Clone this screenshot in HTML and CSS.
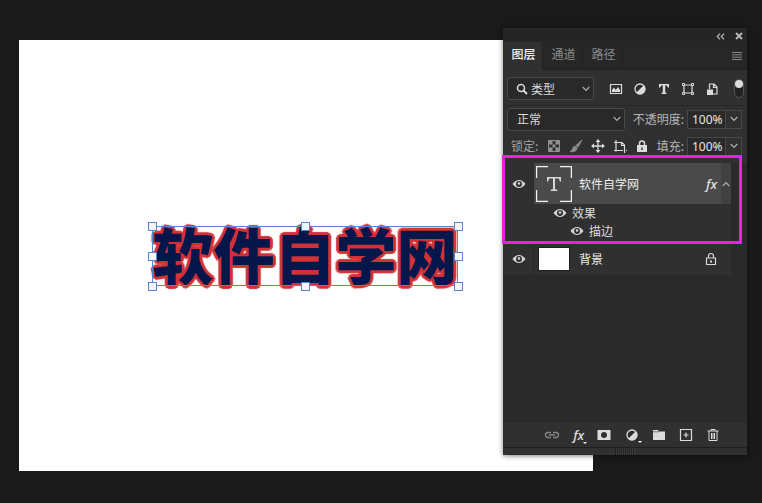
FILE: index.html
```html
<!DOCTYPE html>
<html lang="zh-CN">
<head>
  <meta charset="UTF-8" />
  <meta name="viewport" content="width=device-width, initial-scale=1.0" />
  <title>软件自学网</title>
  <link rel="stylesheet" href="styles.css">
</head>
<body>
  <svg class="sprite" aria-hidden="true">
    <symbol id="eye" viewBox="0 0 14 10">
      <path d="M.5 5Q3.500 1 7 1t6.500 4Q10.500 9 7 9T.5 5z" fill="#d6d6d6"/>
      <circle cx="7" cy="5" r="3" fill="#303030"/>
      <circle cx="7" cy="4.500" r="1.300" fill="#d6d6d6"/>
    </symbol>
    <symbol id="chevron" viewBox="0 0 8 6">
      <path d="M.7 1L4 4.400 7.300 1" fill="none" stroke="currentColor" stroke-width="1.100"/>
    </symbol>
    <symbol id="half" viewBox="0 0 14 14">
      <circle cx="7" cy="7" r="5" fill="#2c2c2c" stroke="currentColor" stroke-width="1.300"/>
      <path d="M10.800 3.200A5.400 5.400 0 0 1 3.200 10.800z" fill="currentColor"/>
    </symbol>
  </svg>

  <main class="workspace">
    <section class="artboard">
      <div class="text-object">
        <h1>软件自学网</h1>
        <i class="handle nw"></i><i class="handle n"></i><i class="handle ne"></i>
        <i class="handle w"></i><i class="handle e"></i>
        <i class="handle sw"></i><i class="handle s"></i><i class="handle se"></i>
      </div>
    </section>

    <aside class="panel">
      <div class="titlebar">
        <button aria-label="折叠"><svg width="9" height="7" viewBox="0 0 9 7"><path d="M4 .7L1.300 3.500 4 6.300M8 .7L5.300 3.500 8 6.300" fill="none" stroke="currentColor" stroke-width="1.200"/></svg></button>
        <button class="close" aria-label="关闭"><svg width="8" height="8" viewBox="0 0 8 8"><path d="M1 1l6 6M7 1L1 7" stroke="currentColor" stroke-width="2"/></svg></button>
      </div>

      <nav class="tabs">
        <button class="tab active">图层</button>
        <button class="tab">通道</button>
        <button class="tab">路径</button>
        <button class="menu" aria-label="菜单"><svg width="10" height="8" viewBox="0 0 10 8"><path d="M0 .5h10M0 2.800h10M0 5.200h10M0 7.500h10" stroke="currentColor"/></svg></button>
      </nav>

      <div class="row filter-row">
        <div class="select kind">
          <svg class="search" width="12" height="12" viewBox="0 0 12 12"><circle cx="5" cy="5" r="3.500" fill="none" stroke="currentColor" stroke-width="1.500"/><path d="M7.500 7.500L11 11" stroke="currentColor" stroke-width="2"/></svg>
          <select aria-label="过滤"><option>类型</option></select>
          <svg class="arrow" width="8" height="6"><use href="#chevron"/></svg>
        </div>
        <div class="filters">
          <button aria-label="像素"><svg width="14" height="14" viewBox="0 0 14 14"><path d="M1.500 2.500h11v9h-11z" fill="none" stroke="currentColor" stroke-width="1.200"/><path d="M3 10V8l2-2.500L6.800 8 9 5l2 3v2z" fill="currentColor"/></svg></button>
          <button aria-label="调整"><svg width="14" height="14"><use href="#half"/></svg></button>
          <button aria-label="文字"><svg width="14" height="14" viewBox="0 0 14 14"><path d="M2 2h10v3.500h-1.200L10 3.600H8.200v7l1.300.3V12h-5v-1.100l1.300-.3v-7H4l-.8 1.900H2z" fill="currentColor"/></svg></button>
          <button aria-label="形状"><svg width="14" height="14" viewBox="0 0 14 14"><path d="M3 3h8v8H3z" fill="none" stroke="currentColor" stroke-width="1.200"/><path d="M1.500 1.500h2v2h-2zM10.500 1.500h2v2h-2zM1.500 10.500h2v2h-2zM10.500 10.500h2v2h-2z" fill="#303030" stroke="currentColor"/></svg></button>
          <button aria-label="智能对象"><svg width="14" height="14" viewBox="0 0 14 14"><path d="M4.500 7V2H9l3 3v7H7.500M8.500 2v3.500H12" fill="none" stroke="currentColor" stroke-width="1.200"/><path d="M2 7.500h6V13H2z" fill="currentColor"/></svg></button>
        </div>
        <button class="toggle" aria-label="过滤开关"></button>
      </div>

      <div class="row blend-row">
        <div class="select blend">
          <select aria-label="混合模式"><option>正常</option></select>
          <svg class="arrow" width="8" height="6"><use href="#chevron"/></svg>
        </div>
        <div class="amount">
          <label for="opacity">不透明度:</label>
          <input id="opacity" value="100%">
          <button aria-label="调整不透明度"><svg width="8" height="6"><use href="#chevron"/></svg></button>
        </div>
      </div>

      <div class="row lock-row">
        <span class="lock-label">锁定:</span>
        <div class="locks">
          <button aria-label="锁定透明像素"><svg width="14" height="14" viewBox="0 0 14 14"><path d="M1.500 1.500h11v11h-11z" fill="none" stroke="#909090"/><path d="M2 2h3.500v3.500H2zM8.500 2H12v3.500H8.500zM5.500 5.500h3v3h-3zM2 8.500h3.500V12H2zM8.500 8.500H12V12H8.500z" fill="#909090"/></svg></button>
          <button aria-label="锁定图像像素"><svg width="14" height="14" viewBox="0 0 14 14"><path d="M13 1L7 6.500l1.800 1.800zM6 7.200c-2 0-2 1.800-2.500 3-.4 1-1.500 1.800-2.500 2.300 3 .8 7-.2 7-3.300z" fill="#8c8c8c" stroke="#8c8c8c"/></svg></button>
          <button aria-label="锁定位置"><svg width="14" height="14" viewBox="0 0 14 14"><path d="M7 2v10M2 7h10" stroke="currentColor" stroke-width="1.300"/><path d="M7 0l2.500 3h-5zM7 14l2.500-3h-5zM0 7l3-2.500v5zM14 7l-3-2.500v5z" fill="currentColor"/></svg></button>
          <button aria-label="防止嵌套"><svg width="14" height="14" viewBox="0 0 14 14"><path d="M3 1v11.500M1 3.500h8l2.500 2.500V14M1 11.500h9M13 11.500h1M8.500 3.500V6.500h3" fill="none" stroke="currentColor" stroke-width="1.200"/></svg></button>
          <button aria-label="锁定全部"><svg width="14" height="14" viewBox="0 0 14 14"><path d="M4.500 6V4.500a2.500 2.500 0 0 1 5 0V6" fill="none" stroke="currentColor" stroke-width="1.500"/><path d="M2 6h10v7H2z" fill="currentColor"/><path d="M7 8.500V11" stroke="#303030" stroke-width="1.400"/></svg></button>
        </div>
        <div class="amount">
          <label for="fill">填充:</label>
          <input id="fill" value="100%">
          <button aria-label="调整填充"><svg width="8" height="6"><use href="#chevron"/></svg></button>
        </div>
      </div>

      <div class="layers">
        <div class="layer-group">
          <div class="layer selected">
            <button class="visibility" aria-label="可见性"><svg width="14" height="10"><use href="#eye"/></svg></button>
            <div class="layer-body">
              <svg class="thumb" width="36" height="36" viewBox="0 0 36 36"><path d="M.5 12V.5H12M24 .5h11.500V12M35.500 24v11.500H24M12 35.500H.5V24" fill="none" stroke="#f2f2f2" stroke-width="1.400"/><path d="M11 11h14v4.500h-1.200l-.8-2.900h-4v10.600l2.300.6V25h-6.600v-1.200l2.300-.6V12.600h-4l-.8 2.900H11z" fill="#d8d8d8"/></svg>
              <span class="name">软件自学网</span>
              <span class="fx">fx</span>
            </div>
            <button class="collapse" aria-label="收起效果"><svg width="8" height="6"><use href="#chevron"/></svg></button>
          </div>
          <div class="effect"><svg width="14" height="10"><use href="#eye"/></svg>效果</div>
          <div class="effect nested"><svg width="14" height="10"><use href="#eye"/></svg>描边</div>
          <div class="highlight"></div>
        </div>
        <div class="layer background">
          <button class="visibility" aria-label="可见性"><svg width="14" height="10"><use href="#eye"/></svg></button>
          <div class="layer-body">
            <span class="thumb blank"></span>
            <span class="name">背景</span>
            <svg class="locked" width="12" height="14" viewBox="0 0 12 14"><path d="M1.500 6h9v6.500h-9zM3.500 6V4a2.500 2.500 0 0 1 5 0v2" fill="none" stroke="#d6d6d6" stroke-width="1.200"/><path d="M5 8.500h2v2H5z" fill="#d6d6d6"/></svg>
          </div>
        </div>
      </div>

      <footer class="actions">
        <button class="dim" aria-label="链接"><svg width="16" height="14" viewBox="0 0 16 14"><path d="M7 4.500H4a2.500 2.500 0 0 0 0 5h3M9 4.500h3a2.500 2.500 0 0 1 0 5H9M5 7h6" fill="none" stroke="currentColor" stroke-width="1.300"/></svg></button>
        <button class="more fx" aria-label="图层样式">fx</button>
        <button aria-label="蒙版"><svg width="14" height="14" viewBox="0 0 14 14"><path d="M.5 2h13v10H.5z" fill="currentColor"/><circle cx="7" cy="7" r="3" fill="#303030"/></svg></button>
        <button class="more" aria-label="调整图层"><svg width="14" height="14"><use href="#half"/></svg></button>
        <button aria-label="新建组"><svg width="14" height="14" viewBox="0 0 14 14"><path d="M1 2h5l1 1.500h6V12H1z" fill="currentColor"/><path d="M1 3.800h6" stroke="#303030" stroke-width=".6"/></svg></button>
        <button aria-label="新建图层"><svg width="14" height="14" viewBox="0 0 14 14"><path d="M1.500 1.500h11v11h-11zM7 4.500v5M4.500 7h5" fill="none" stroke="currentColor" stroke-width="1.200"/></svg></button>
        <button aria-label="删除"><svg width="14" height="14" viewBox="0 0 14 14"><path d="M1.500 3h11M5 3V1.500h4V3M3 3v9.500h8V3M5.500 5v6M7 5v6M8.500 5v6" fill="none" stroke="currentColor"/></svg></button>
      </footer>
      <div class="grip"></div>
    </aside>
  </main>
</body>
</html>
```

FILE: styles.css
```css
* {
  box-sizing: border-box;
}

body {
  margin: 0;
  background: #1a1a1a;
  color: #dcdcdc;
  font-family: 'Noto Sans CJK SC', sans-serif;
  font-size: 12px;
  line-height: 16px;
}

button, input, select {
  margin: 0;
  padding: 0;
  border: 0;
  border-radius: 0;
  background: none;
  color: inherit;
  font: inherit;
  appearance: none;
  outline: none;
}

button {
  display: flex;
  align-items: center;
  justify-content: center;
}

svg {
  display: block;
  flex: none;
}

.sprite {
  position: absolute;
  width: 0;
  height: 0;
}

.workspace {
  position: relative;
  display: flex;
  min-height: 100vh;
  padding: 40px 169px 32px 19px;
}

.artboard {
  flex: 1;
  display: flex;
  align-items: center;
  justify-content: center;
  padding-right: 2px;
  background: #fff;
}

/* selected text with its transform box */
.text-object {
  position: relative;
}

h1 {
  margin: 0;
  padding-bottom: 4px;
  color: #04164a;
  font-size: 61px;
  line-height: 56px;
  font-weight: 900;
  text-shadow:
    3px 0 1px #d03238, -3px 0 1px #d03238,
    0 3px 1px #d03238, 0 -3px 1px #d03238,
    2px 2px 1px #d03238, -2px 2px 1px #d03238,
    2px -2px 1px #d03238, -2px -2px 1px #d03238;
  white-space: nowrap;
}

.text-object::after {
  content: "";
  position: absolute;
  inset: 0;
  border: 1px solid #5a84cc;
}

.handle {
  position: absolute;
  z-index: 1;
  width: 9px;
  height: 9px;
  margin: -4px;
  border: 1px solid #5a84cc;
  background: #f4f6ff;
}

.nw, .n, .ne { top: 0; }
.w, .e { top: 50%; }
.sw, .s, .se { top: 100%; }
.nw, .w, .sw { left: 0; }
.n, .s { left: 50%; }
.ne, .e, .se { left: 100%; }

.panel {
  position: absolute;
  top: 28px;
  right: 15px;
  bottom: 48px;
  width: 244px;
  display: flex;
  flex-direction: column;
  background: #303030;
  box-shadow: 0 1px 5px rgba(0, 0, 0, 0.5);
}

.titlebar {
  display: flex;
  justify-content: flex-end;
  gap: 10px;
  height: 14px;
  padding: 2px 4px 0 0;
  background: #252525;
  color: #b8b8b8;
}

.tabs {
  display: flex;
  height: 28px;
  border-bottom: 1px solid #202020;
  background: #272727;
}

.tab {
  width: 40px;
  height: 28px;
  padding: 0 0 4px 2px;
  border-right: 1px solid #222;
  color: #8c8c8c;
}

.tab.active {
  background: #303030;
  color: #f0f0f0;
  font-weight: 500;
}

.menu {
  margin-left: auto;
  padding-right: 5px;
  color: #888;
}

.row {
  display: flex;
  align-items: center;
  justify-content: space-between;
  height: 28px;
  padding: 0 5px 0 4px;
}

.filter-row {
  height: 36px;
  padding: 2px 3px 0 4px;
  border-bottom: 1px solid #272727;
}

.blend-row {
  height: 26px;
}

.select {
  position: relative;
  display: flex;
  align-items: center;
  height: 23px;
  border: 1px solid #494949;
  border-radius: 3px;
  background: #292929;
}

.select select {
  width: 100%;
  height: 21px;
  padding-left: 9px;
}

.kind {
  width: 87px;
}

.kind select {
  padding-left: 23px;
}

.blend {
  width: 118px;
}

.search {
  position: absolute;
  left: 8px;
}

.arrow {
  position: absolute;
  right: 3px;
  color: #b0b0b0;
  pointer-events: none;
}

.filters {
  display: flex;
  gap: 10px;
}

.toggle {
  width: 10px;
  height: 19px;
  align-items: flex-start;
  border: 1px solid #555;
  border-radius: 5px;
  background: #222;
}

.toggle::before {
  content: "";
  width: 8px;
  height: 8px;
  border-radius: 50%;
  background: #dcdcdc;
}

.amount {
  display: flex;
  align-items: center;
  color: #b4b4b4;
}

.amount label {
  margin-right: 3px;
}

.amount input {
  width: 39px;
  height: 19px;
  padding-left: 4px;
  border: 1px solid #484848;
  background: #292929;
  color: #e6e6e6;
  font-family: 'Noto Sans', sans-serif;
}

.amount button {
  width: 16px;
  height: 19px;
  border: 1px solid #484848;
  border-left: 0;
}

.lock-row {
  padding-left: 8px;
}

.lock-label {
  color: #a4a4a4;
}

.locks {
  display: flex;
  gap: 8px;
}

.layers {
  flex: 1;
  margin-top: 3px;
  padding-right: 16px;
  background: #2a2a2a;
}

.layer-group {
  position: relative;
  padding-bottom: 1px;
  background: #303030;
}

.layer {
  display: flex;
  height: 41px;
  background: #303030;
}

.visibility {
  width: 31px;
  padding-left: 2px;
  border-right: 1px solid #292929;
}

.layer-body {
  flex: 1;
  display: flex;
  align-items: center;
  padding: 0 4px 0 2px;
}

.selected .layer-body {
  background: #4a4a4a;
}

.name {
  flex: 1;
  padding-left: 7px;
  color: #eee;
}

.fx {
  color: #dcdcdc;
  font-family: 'Open Sans', sans-serif;
  font-size: 13px;
  font-style: italic;
  font-weight: 600;
}

.collapse {
  width: 10px;
  background: #404040;
  color: #b0b0b0;
}

.collapse svg {
  transform: rotate(180deg);
}

.effect {
  display: flex;
  align-items: center;
  gap: 5px;
  height: 17px;
  padding-left: 50px;
}

.nested {
  height: 20px;
  padding-left: 67px;
}

.highlight {
  position: absolute;
  inset: -8px -11px -2px -1px;
  border: 3px solid #ec20e0;
  pointer-events: none;
}

.background {
  height: 33px;
  border-top: 1px solid #292929;
}

.blank {
  width: 32px;
  height: 24px;
  margin: 0 2px;
  border: 1px solid #202020;
  background: #fff;
}

.locked {
  margin-right: 10px;
}

.actions {
  display: flex;
  align-items: center;
  justify-content: space-between;
  height: 26px;
  padding: 0 27px 0 41px;
  border-top: 1px solid #262626;
}

.dim {
  color: #858585;
}

.more {
  position: relative;
}

.more::after {
  content: "";
  position: absolute;
  right: -3px;
  bottom: -1px;
  border: 2px solid transparent;
  border-top-color: #fff;
  border-bottom: 0;
}

.grip {
  display: flex;
  justify-content: center;
  height: 8px;
  border-top: 1px solid #202020;
}

.grip::before {
  content: "";
  width: 20px;
  background: repeating-linear-gradient(90deg, #222 0 1px, #3c3c3c 1px 2px);
}
```
